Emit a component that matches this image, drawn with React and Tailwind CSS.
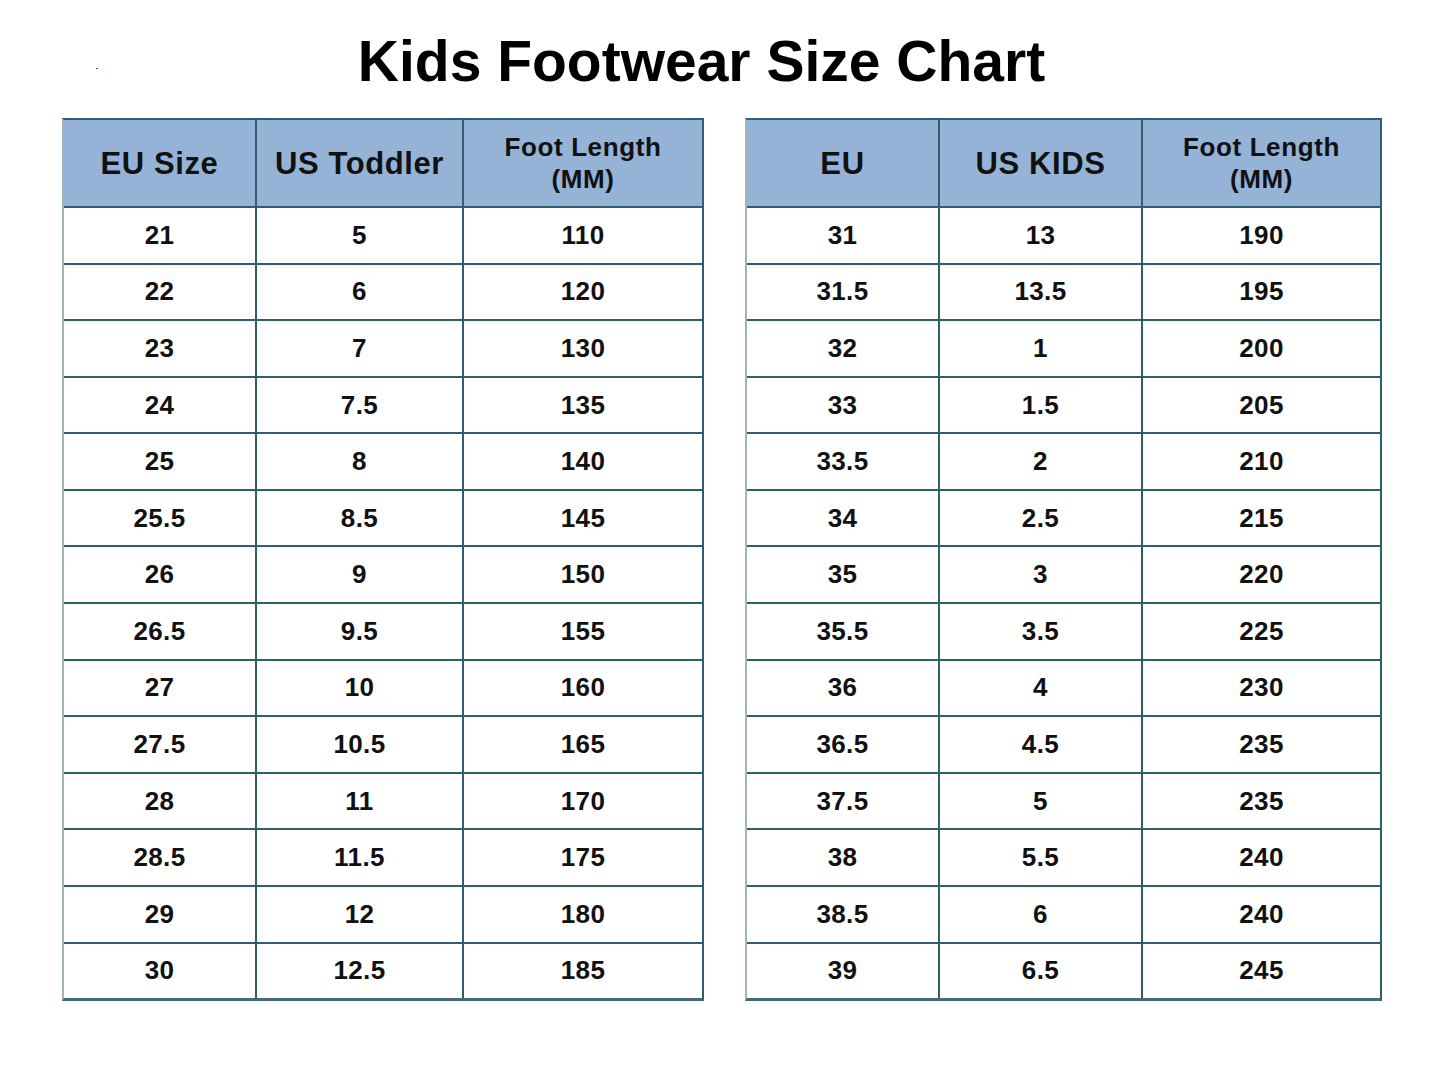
import React from 'react';

const toddler = [
  ['21', '5', '110'],
  ['22', '6', '120'],
  ['23', '7', '130'],
  ['24', '7.5', '135'],
  ['25', '8', '140'],
  ['25.5', '8.5', '145'],
  ['26', '9', '150'],
  ['26.5', '9.5', '155'],
  ['27', '10', '160'],
  ['27.5', '10.5', '165'],
  ['28', '11', '170'],
  ['28.5', '11.5', '175'],
  ['29', '12', '180'],
  ['30', '12.5', '185'],
];

const kids = [
  ['31', '13', '190'],
  ['31.5', '13.5', '195'],
  ['32', '1', '200'],
  ['33', '1.5', '205'],
  ['33.5', '2', '210'],
  ['34', '2.5', '215'],
  ['35', '3', '220'],
  ['35.5', '3.5', '225'],
  ['36', '4', '230'],
  ['36.5', '4.5', '235'],
  ['37.5', '5', '235'],
  ['38', '5.5', '240'],
  ['38.5', '6', '240'],
  ['39', '6.5', '245'],
];

// widths of the three columns (px)
const SizeTable = ({ heads, rows, cols }) => (
  <div className="flex flex-col border-t-2 border-t-[#2d5f6c] border-l-2 border-l-[#a3b3ba] border-r-2 border-r-[#2d5f6c] border-b-[3px] border-b-[#46697a]">
    <div className="flex h-[86px] bg-[#95b3d7]">
      {heads.map((h, i) => (
        <div
          key={i}
          style={{ width: cols[i] }}
          className={`flex flex-col items-center justify-center shrink-0 ${i > 0 ? 'border-l-2 border-[#2d5f6c]' : ''}`}
        >
          {h}
        </div>
      ))}
    </div>
    <div className="flex flex-col h-[792px]">
      {rows.map((r, ri) => (
        <div key={ri} className="flex flex-1 border-t-2 border-[#2d5f6c]">
          {r.map((c, i) => (
            <div
              key={i}
              style={{ width: cols[i] }}
              className={`flex items-center justify-center shrink-0 text-[26px] tracking-[0.4px] font-bold text-[#111] ${i > 0 ? 'border-l-2 border-[#2d5f6c]' : ''}`}
            >
              {c}
            </div>
          ))}
        </div>
      ))}
    </div>
  </div>
);

const Big = ({ children }) => (
  <span className="text-[31px] tracking-[0.6px] font-bold leading-none text-[#111]">{children}</span>
);
const Two = () => (
  <>
    <span className="text-[26px] tracking-[0.6px] font-bold leading-[32px] text-[#111]">Foot Length</span>
    <span className="text-[26px] tracking-[0.6px] font-bold leading-[32px] text-[#111]">(MM)</span>
  </>
);

const App = () => (
  <div
    className="relative w-[1445px] h-[1067px] bg-white overflow-hidden"
    style={{ fontFamily: '"Liberation Sans", Arial, sans-serif' }}
  >
    {/* stray speck in the original */}
    <span className="absolute left-[96px] top-[68px] w-[2px] h-[1px] bg-[#2d5f6c]" />
    <div className="pt-[33px] pr-[42px] flex justify-center">
      <h1 className="text-[57px] leading-[57px] font-bold text-black">Kids Footwear Size Chart</h1>
    </div>
    <div className="mt-[28px] pl-[62px] flex gap-[41px]">
      <SizeTable
        heads={[<Big>EU Size</Big>, <Big>US Toddler</Big>, <Two />]}
        rows={toddler}
        cols={[191, 207, 240]}
      />
      <SizeTable
        heads={[<Big>EU</Big>, <Big>US KIDS</Big>, <Two />]}
        rows={kids}
        cols={[191, 203, 239]}
      />
    </div>
  </div>
);

export default App;
